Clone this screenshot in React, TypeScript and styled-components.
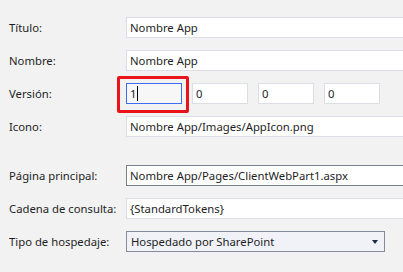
import React from "react";
import styled, { createGlobalStyle, css } from "styled-components";

const Global = createGlobalStyle`
  html, body { margin: 0; padding: 0; background: #f2f2f2; }
  body { font-family: "Noto Sans", "Open Sans", sans-serif; font-size: 11.3px; color: #1e1e1e; }
`;

const Page = styled.div`
  width: 403px;
  height: 272px;
  overflow: hidden;
  background: #f2f2f2;
  padding: 17px 0 0 9px;
  box-sizing: border-box;
  display: flex;
  flex-direction: column;
`;

const Section = styled.div<{ $gapTop?: number }>`
  display: grid;
  grid-template-columns: 117px 1fr;
  row-gap: 12px;
  margin-top: ${(p) => p.$gapTop ?? 0}px;
`;

const Label = styled.div`
  height: 21px;
  display: flex;
  align-items: center;
  white-space: nowrap;
  color: #1e1e1e;
`;

const Field = styled.div<{ $variant?: "light" | "dark" }>`
  height: 21px;
  box-sizing: border-box;
  background: #ffffff;
  border: 1px solid #dcdee5;
  border-right: none;
  margin-right: -2px;
  padding: 0 3px;
  display: flex;
  align-items: center;
  white-space: nowrap;
  overflow: hidden;
  color: #1e1e1e;
  ${(p) =>
    p.$variant === "dark" &&
    css`
      border-color: #7b828f;
    `}
`;

const VersionRow = styled.div`
  display: flex;
  gap: 10px;
  height: 21px;
  align-items: stretch;
`;

const VersionBox = styled.div<{ $focus?: boolean }>`
  position: relative;
  width: 56px;
  height: 21px;
  box-sizing: border-box;
  background: #ffffff;
  border: 1px solid #dcdee5;
  padding: 0 3px;
  display: flex;
  align-items: center;
  ${(p) =>
    p.$focus &&
    css`
      background: #f7f7f7;
      border-color: #3c6ff0;
    `}
`;

const Highlight = styled.div`
  position: absolute;
  left: -10px;
  top: -8px;
  width: 72px;
  height: 37px;
  box-sizing: border-box;
  border: 3px solid #e8141a;
  border-radius: 2px;
  pointer-events: none;
`;

const Caret = styled.span`
  display: inline-block;
  width: 1px;
  height: 15px;
  background: #000;
  margin-left: 1px;
`;

const Select = styled.div`
  width: 259px;
  height: 21px;
  box-sizing: border-box;
  background: #f0f2f8;
  border: 1px solid #858b99;
  padding: 0 3px 0 4px;
  display: flex;
  align-items: center;
  justify-content: space-between;
`;

const Arrow = styled.svg`
  width: 6px;
  height: 4px;
  margin-right: 3px;
  margin-top: 1px;
`;

export default function App() {
  return (
    <>
      <Global />
      <Page>
        <Section>
          <Label>Título:</Label>
          <Field>Nombre App</Field>
          <Label>Nombre:</Label>
          <Field>Nombre App</Field>
          <Label>Versión:</Label>
          <VersionRow>
            <VersionBox $focus>
              <Highlight />
              1<Caret />
            </VersionBox>
            <VersionBox>0</VersionBox>
            <VersionBox>0</VersionBox>
            <VersionBox>0</VersionBox>
          </VersionRow>
          <Label>Icono:</Label>
          <Field>Nombre App/Images/AppIcon.png</Field>
        </Section>
        <Section $gapTop={28}>
          <Label>Página principal:</Label>
          <Field $variant="dark">Nombre App/Pages/ClientWebPart1.aspx</Field>
          <Label>Cadena de consulta:</Label>
          <Field>{"{StandardTokens}"}</Field>
          <Label>Tipo de hospedaje:</Label>
          <Select>
            <span>Hospedado por SharePoint</span>
            <Arrow viewBox="0 0 6 4">
              <path d="M0 0 H6 L3 4 Z" fill="#1e2a44" />
            </Arrow>
          </Select>
        </Section>
      </Page>
    </>
  );
}
